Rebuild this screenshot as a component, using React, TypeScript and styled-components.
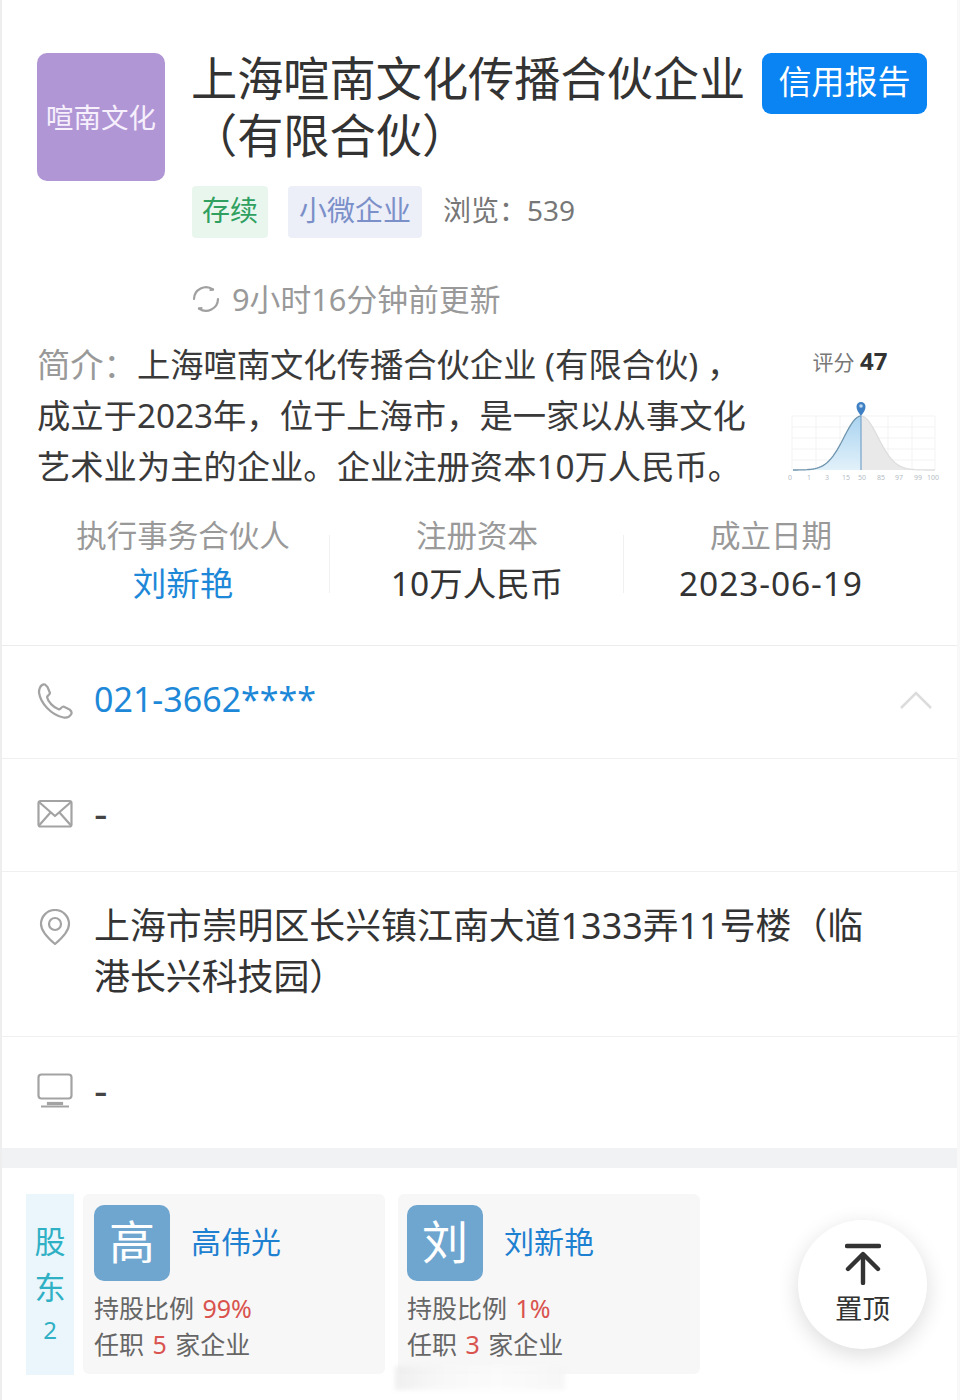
import React from "react";
import styled, { createGlobalStyle } from "styled-components";

const Global = createGlobalStyle`
  html, body { margin: 0; padding: 0; background: #fff; }
  * { box-sizing: border-box; }
  body { font-family: "Noto Sans", "Noto Sans CJK SC", sans-serif; color: #333; }
`;

const Page = styled.div`
  position: relative;
  width: 960px;
  height: 1400px;
  overflow: hidden;
  background: #fff;
  border-left: 2px solid #eeeeee;
  border-right: 3px solid #f8f8f8;
`;
const Head = styled.header`
  display: flex;
  align-items: flex-start;
  padding: 50px 30px 0 35px;
`;
const Logo = styled.div`
  flex: none;
  width: 128px;
  height: 128px;
  margin-top: 3px;
  padding-bottom: 3px;
  border-radius: 10px;
  background: #b196d6;
  color: #f6effc;
  font-size: 27.5px;
  display: flex;
  align-items: center;
  justify-content: center;
  white-space: nowrap;
`;
const HeadMain = styled.div`
  flex: none;
  width: 571px;
  margin-left: 26px;
`;
const Title = styled.h1`
  margin: 0;
  font-size: 46.2px;
  line-height: 57px;
  font-weight: 400;
  color: #333;
  width: 560px;
`;
const Report = styled.button`
  flex: none;
  width: 165px;
  height: 61px;
  margin-top: 3px;
  border: 0;
  border-radius: 9px;
  background: #0a84f2;
  color: #fff;
  font: inherit;
  font-size: 33px;
  padding: 0 0 7px;
`;
const TagRow = styled.div`
  display: flex;
  align-items: center;
  margin: 22px 0 0 1px;
  height: 52px;
`;
const Tag = styled.span<{ $fg: string; $bg: string; $w: number; $gap: number }>`
  width: ${(p) => p.$w}px;
  height: 52px;
  margin-right: ${(p) => p.$gap}px;
  padding-bottom: 7px;
  display: flex;
  align-items: center;
  justify-content: center;
  font-size: 28px;
  border-radius: 4px;
  color: ${(p) => p.$fg};
  background: ${(p) => p.$bg};
`;
const Views = styled.span`
  font-size: 28px;
  color: #777;
  margin-bottom: 7px;
`;
const Update = styled.div`
  display: flex;
  align-items: center;
  gap: 12px;
  height: 40px;
  margin: 41px 0 0 1px;
  font-size: 30.8px;
  color: #999;
`;
const UpdateText = styled.span`
  margin-bottom: 4px;
`;
const Intro = styled.section`
  display: flex;
  align-items: flex-start;
  margin-top: 20px;
  padding-left: 35px;
`;
const IntroText = styled.p`
  margin: 0;
  flex: none;
  width: 751px;
  font-size: 33.3px;
  line-height: 51px;
  color: #3a3a3a;
  white-space: nowrap;
`;
const IntroLabel = styled.span`
  color: #999;
`;
const Score = styled.aside`
  flex: none;
  width: 156px;
  text-align: center;
`;
const ScoreTitle = styled.div`
  height: 59px;
  padding: 6px 32px 0 0;
  font-size: 21px;
  line-height: 32px;
  color: #777;
`;
const ScoreNum = styled.b`
  font-size: 24px;
  color: #333;
  font-weight: 700;
`;
const Stats = styled.section`
  display: grid;
  grid-template-columns: repeat(3, 294px);
  margin: 19px 0 0 34px;
  height: 134px;
`;
const Stat = styled.div<{ $line?: boolean }>`
  height: 96px;
  text-align: center;
  position: relative;
  &::after {
    content: "";
    display: ${(p) => (p.$line ? "block" : "none")};
    position: absolute;
    right: 0;
    top: 24px;
    height: 58px;
    width: 1px;
    background: #f0f0f0;
  }
`;
const StatLabel = styled.div`
  font-size: 30.5px;
  line-height: 48px;
  color: #999;
`;
const StatValue = styled.div<{ $link?: boolean; $spread?: boolean }>`
  font-size: 33.5px;
  line-height: 48px;
  letter-spacing: ${(p) => (p.$spread ? "0.9px" : "0")};
  color: ${(p) => (p.$link ? "#1e88d8" : "#333")};
`;
const Rows = styled.div`
  border-top: 1px solid #ececec;
`;
const Row = styled.div<{ $h: number; $top?: boolean }>`
  display: flex;
  align-items: ${(p) => (p.$top ? "flex-start" : "center")};
  height: ${(p) => p.$h}px;
  padding: ${(p) => (p.$top ? "28px 24px 0 35px" : "0 24px 3px 35px")};
  border-bottom: 1px solid #f0f0f0;
  &:last-child {
    border-bottom: 0;
  }
`;
const RowIcon = styled.div<{ $top?: boolean }>`
  flex: none;
  width: 36px;
  height: 36px;
  margin: ${(p) => (p.$top ? "9px 21px 0 0" : "0 21px 0 0")};
  color: #a3a3a3;
  display: flex;
  align-items: center;
  justify-content: center;
`;
const Phone = styled.span`
  font-size: 34px;
  color: #1e88d8;
  margin-bottom: 3px;
`;
const Dash = styled.span`
  font-size: 42px;
  line-height: 42px;
  color: #444;
  margin-bottom: 2px;
`;
const Address = styled.div`
  font-size: 35.9px;
  line-height: 51px;
  color: #333;
  width: 790px;
`;
const Chevron = styled.div`
  margin-left: auto;
  margin-bottom: 2px;
  color: #dcdcdc;
  display: flex;
`;
const Band = styled.div`
  height: 20px;
  background: #f1f2f3;
`;
const Holders = styled.section`
  display: flex;
  align-items: flex-start;
  padding: 26px 0 0 24px;
`;
const Tab = styled.div`
  flex: none;
  width: 48px;
  height: 181px;
  margin-right: 9px;
  padding-top: 24px;
  background: #eaf6fb;
  color: #2fb0c4;
  font-size: 31px;
  line-height: 46px;
  text-align: center;
`;
const TabCount = styled.div`
  font-size: 24px;
  line-height: 40px;
`;
const Card = styled.div<{ $pad: number }>`
  flex: none;
  width: 302px;
  height: 180px;
  margin-right: 13px;
  padding: 11px ${(p) => p.$pad}px;
  background: #f7f7f7;
  border-radius: 6px;
`;
const CardTop = styled.div`
  display: flex;
  align-items: center;
  gap: 21px;
  margin-bottom: 9px;
`;
const Avatar = styled.div`
  width: 76px;
  height: 76px;
  padding-bottom: 9px;
  border-radius: 10px;
  background: #6fa6d0;
  color: #fff;
  font-size: 46px;
  display: flex;
  align-items: center;
  justify-content: center;
`;
const Name = styled.span`
  font-size: 30px;
  color: #1e80d0;
  margin-bottom: 6px;
`;
const Meta = styled.div`
  font-size: 25px;
  line-height: 36px;
  word-spacing: 2px;
  color: #666;
  white-space: nowrap;
`;
const Red = styled.span`
  color: #d9534f;
`;
const TopBtn = styled.button`
  position: absolute;
  left: 796px;
  top: 1220px;
  width: 129px;
  height: 129px;
  border: 0;
  border-radius: 50%;
  background: #fff;
  box-shadow: 0 6px 22px rgba(0, 0, 0, 0.14);
  display: flex;
  flex-direction: column;
  align-items: center;
  gap: 5px;
  padding: 23px 0 0;
  font: inherit;
  font-size: 27.5px;
  line-height: 38px;
  color: #333;
`;
const Smudge = styled.div`
  position: absolute;
  left: 393px;
  top: 1366px;
  width: 170px;
  height: 24px;
  background: linear-gradient(90deg, #ececec 0%, #f6f6f6 25%, #fbfbfb 60%, #f5f5f5 100%);
  filter: blur(2px);
  opacity: 0.8;
`;

const BASE = 72;
const bell = (x: number) => BASE - 54 * Math.exp(-((x - 73) ** 2) / (2 * 17 ** 2));
const line = (from: number, to: number) => {
  const pts: string[] = [];
  for (let x = from; x <= to; x += 2) pts.push(`${x} ${bell(x).toFixed(1)}`);
  return pts.join(" L");
};
const axis: [number, string][] = [
  [2, "0"], [21, "1"], [39, "3"], [58, "15"], [74, "50"],
  [93, "85"], [111, "97"], [130, "99"], [145, "100"],
];

const ChartSvg = () => (
  <svg width="156" height="88" viewBox="0 0 156 88" aria-hidden>
    <defs>
      <linearGradient id="bl" x1="0" y1="0" x2="0" y2="1">
        <stop offset="0" stopColor="#a9d3f0" />
        <stop offset="1" stopColor="#e2f1fa" />
      </linearGradient>
    </defs>
    <g stroke="#f3f3f3" strokeWidth="1">
      {[18, 29, 40, 51, 62].map((y) => (
        <line key={y} x1="4" x2="147" y1={y} y2={y} />
      ))}
      {[4, 28, 52, 76, 100, 124, 147].map((x) => (
        <line key={x} x1={x} x2={x} y1="18" y2="72" />
      ))}
    </g>
    <path d={`M${line(5, 73)} L73 ${BASE} L5 ${BASE}Z`} fill="url(#bl)" />
    <path d={`M${line(73, 147)} L147 ${BASE} L73 ${BASE}Z`} fill="#e9e9e9" />
    <path d={`M${line(5, 73)}`} fill="none" stroke="#6f94ad" strokeWidth="1.3" />
    <path d={`M${line(73, 147)}`} fill="none" stroke="#dedede" strokeWidth="1.3" />
    <line x1="73" y1="18" x2="73" y2="72" stroke="#7fa9cc" strokeWidth="1.3" />
    <path d="M73 18 C70 14 68.500 11.500 68.500 8.500 A4.500 4.500 0 0 1 77.500 8.500 C77.500 11.500 76 14 73 18Z" fill="#3f80c4" />
    <circle cx="73" cy="8" r="1.800" fill="#bcd8f0" />
    <g fontSize="7" fill="#b5bcc4" textAnchor="middle">
      {axis.map(([x, t]) => (
        <text key={t} x={x} y="82">{t}</text>
      ))}
    </g>
  </svg>
);

const Refresh = () => (
  <svg width="28" height="28" viewBox="0 0 28 28" fill="none" stroke="#a0a0a0" strokeWidth="2.200" strokeLinecap="round" aria-hidden>
    <path d="M2 14 A12 12 0 0 1 21 4.500" />
    <path d="M26 14 A12 12 0 0 1 7 23.500" />
    <path d="M21 4.500 L18.500 5" />
    <path d="M7 23.500 L9.500 23" />
  </svg>
);

const PhoneIcon = () => (
  <svg width="36" height="36" viewBox="0 0 36 36" fill="none" stroke="currentColor" strokeWidth="2.200" strokeLinejoin="round" aria-hidden>
    <path d="M3 4.500 C4 2.500 6 1 8 1.500 L10.500 4 L13 10 C12.500 12 10.500 12.500 10 14 C11 19 16.500 24.500 22 26.500 C24 26 24.500 23.500 26.500 23.500 L32.500 26.500 C34.500 28 35 30 34 31.500 C32.500 34 29.500 35 26.500 34.500 C14 32 3.500 20 2 9.500 C2 7.500 2.300 6 3 4.500Z" />
  </svg>
);
const MailIcon = () => (
  <svg width="36" height="30" viewBox="0 0 36 30" fill="none" stroke="currentColor" strokeWidth="2.200" strokeLinejoin="round" aria-hidden>
    <rect x="1.500" y="2" width="33" height="25.500" rx="2" />
    <path d="M2 3 L18 17 L34 3" />
    <path d="M2 26.500 L13.500 13.500 M34 26.500 L22.500 13.500" />
  </svg>
);
const PinIcon = () => (
  <svg width="32" height="36" viewBox="0 0 32 36" fill="none" stroke="currentColor" strokeWidth="2.200" aria-hidden>
    <path d="M16 35 C10 30 2 22 2 15 A14 14 0 0 1 30 15 C30 22 22 30 16 35Z" strokeLinejoin="round" />
    <circle cx="16" cy="15" r="6" />
  </svg>
);
const ScreenIcon = () => (
  <svg width="36" height="36" viewBox="0 0 36 36" fill="none" stroke="currentColor" strokeWidth="2.200" aria-hidden>
    <rect x="1.500" y="1.500" width="33" height="24" rx="3" />
    <path d="M11 30 H25 V31 H11Z" fill="currentColor" />
    <path d="M4 33.500 H32" strokeWidth="2" />
  </svg>
);
const ChevronUp = () => (
  <svg width="34" height="20" viewBox="0 0 34 20" fill="none" stroke="currentColor" strokeWidth="2.600" aria-hidden>
    <path d="M2 18 L17 3 L32 18" />
  </svg>
);
const ArrowTop = () => (
  <svg width="36" height="42" viewBox="0 0 36 42" fill="none" stroke="#333" strokeWidth="4.400" strokeLinecap="round" strokeLinejoin="round" aria-hidden>
    <path d="M2 3 H34" />
    <path d="M18 40 V12" />
    <path d="M3 26 L18 11 L33 26" />
  </svg>
);

const holders = [
  { first: "高", name: "高伟光", pct: "99%", jobs: 5, pad: 11 },
  { first: "刘", name: "刘新艳", pct: "1%", jobs: 3, pad: 9 },
];

export default function App() {
  return (
    <Page lang="zh-CN">
      <Global />
      <Head>
        <Logo>喧南文化</Logo>
        <HeadMain>
          <Title>上海喧南文化传播合伙企业（有限合伙）</Title>
          <TagRow>
            <Tag $fg="#2fa05f" $bg="#e9f6ee" $w={76} $gap={20}>存续</Tag>
            <Tag $fg="#7b8fc9" $bg="#eceef8" $w={134} $gap={21}>小微企业</Tag>
            <Views>浏览：539</Views>
          </TagRow>
          <Update>
            <Refresh />
            <UpdateText>9小时16分钟前更新</UpdateText>
          </Update>
        </HeadMain>
        <Report>信用报告</Report>
      </Head>
      <Intro>
        <IntroText>
          <IntroLabel>简介：</IntroLabel>上海喧南文化传播合伙企业 (有限合伙) ，<br />
          成立于2023年，位于上海市，是一家以从事文化<br />
          艺术业为主的企业。企业注册资本10万人民币。
        </IntroText>
        <Score>
          <ScoreTitle>评分 <ScoreNum>47</ScoreNum></ScoreTitle>
          <ChartSvg />
        </Score>
      </Intro>
      <Stats>
        <Stat $line>
          <StatLabel>执行事务合伙人</StatLabel>
          <StatValue $link>刘新艳</StatValue>
        </Stat>
        <Stat $line>
          <StatLabel>注册资本</StatLabel>
          <StatValue>10万人民币</StatValue>
        </Stat>
        <Stat>
          <StatLabel>成立日期</StatLabel>
          <StatValue $spread>2023-06-19</StatValue>
        </Stat>
      </Stats>
      <Rows>
        <Row $h={113}>
          <RowIcon><PhoneIcon /></RowIcon>
          <Phone>021-3662****</Phone>
          <Chevron><ChevronUp /></Chevron>
        </Row>
        <Row $h={113}>
          <RowIcon><MailIcon /></RowIcon>
          <Dash>-</Dash>
        </Row>
        <Row $h={165} $top>
          <RowIcon $top><PinIcon /></RowIcon>
          <Address>上海市崇明区长兴镇江南大道1333弄11号楼（临港长兴科技园）</Address>
        </Row>
        <Row $h={111}>
          <RowIcon><ScreenIcon /></RowIcon>
          <Dash>-</Dash>
        </Row>
      </Rows>
      <Band />
      <Holders>
        <Tab>
          股<br />东
          <TabCount>2</TabCount>
        </Tab>
        {holders.map((h) => (
          <Card key={h.name} $pad={h.pad}>
            <CardTop>
              <Avatar>{h.first}</Avatar>
              <Name>{h.name}</Name>
            </CardTop>
            <Meta>持股比例 <Red>{h.pct}</Red></Meta>
            <Meta>任职 <Red>{h.jobs}</Red> 家企业</Meta>
          </Card>
        ))}
      </Holders>
      <Smudge />
      <TopBtn>
        <ArrowTop />
        置顶
      </TopBtn>
    </Page>
  );
}
